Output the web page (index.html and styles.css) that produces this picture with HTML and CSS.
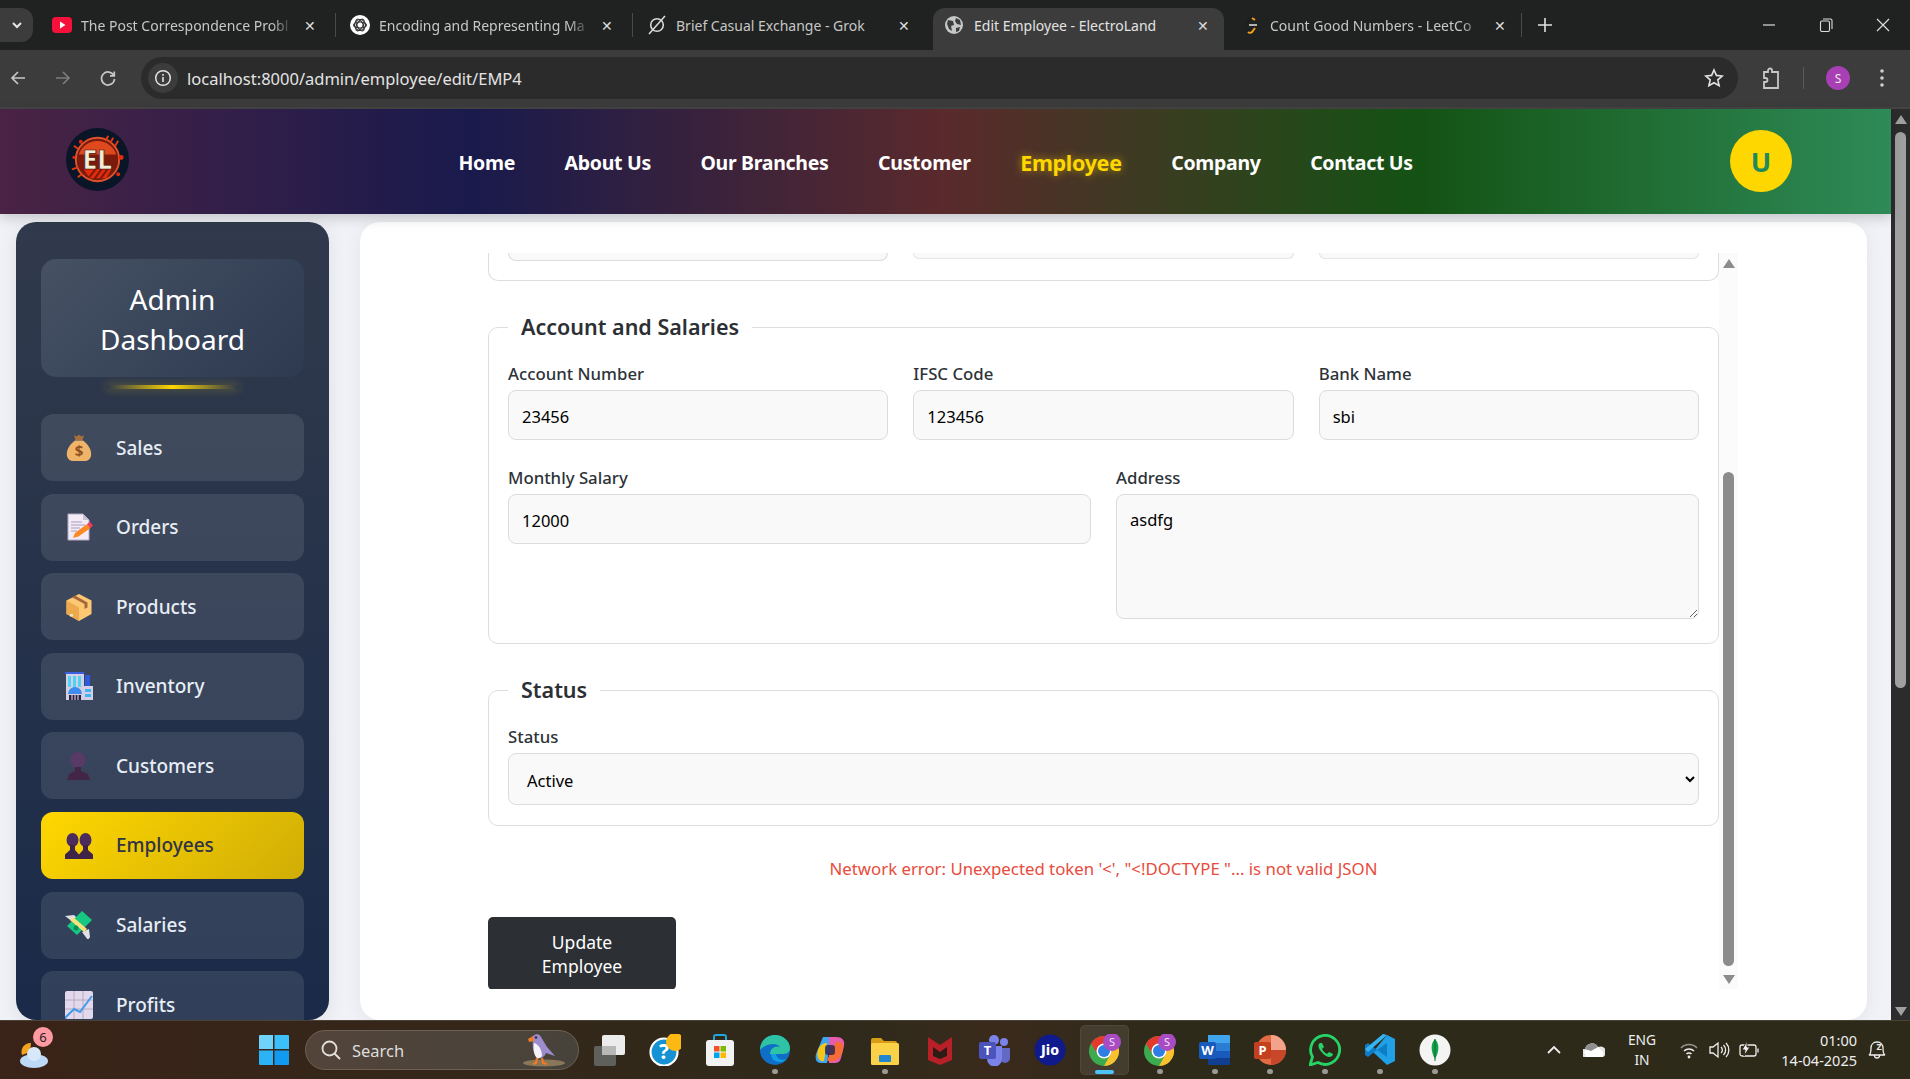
FILE: index.html
```html
<!DOCTYPE html>
<html lang="en">
<head>
<meta charset="utf-8">
<title>Edit Employee - ElectroLand</title>
<link rel="stylesheet" href="styles.css">
</head>
<body>
<div class="tabstrip">
  <div class="tab-menu"><svg width="12" height="12" viewBox="0 0 12 12"><path d="M2 4l4 4 4-4" fill="none" stroke="#e6e6e6" stroke-width="2"/></svg></div>
  <div class="tab">
    <svg class="favicon" viewBox="0 0 20 20"><rect y="2" width="20" height="16" rx="4" fill="#f6113a"/><path d="M8 6.5l5.5 3.5L8 13.5z" fill="#fff"/></svg>
    <span class="tab-title">The Post Correspondence Probl</span><span class="tab-close">✕</span>
  </div>
  <div class="tab tab-sep">
    <svg class="favicon" viewBox="0 0 20 20"><circle cx="10" cy="10" r="10" fill="#fff"/><g fill="none" stroke="#333" stroke-width="1.1"><circle cx="10" cy="10" r="5.5"/><ellipse cx="10" cy="10" rx="6.5" ry="3"/><ellipse cx="10" cy="10" rx="6.5" ry="3" transform="rotate(60 10 10)"/><ellipse cx="10" cy="10" rx="6.5" ry="3" transform="rotate(120 10 10)"/></g></svg>
    <span class="tab-title">Encoding and Representing Ma</span><span class="tab-close">✕</span>
  </div>
  <div class="tab tab-sep">
    <svg class="favicon" viewBox="0 0 20 20"><g fill="none" stroke="#d8d8d8" stroke-width="1.6"><circle cx="10" cy="10" r="6.3"/><path d="M2 19L18 1"/></g></svg>
    <span class="tab-title tab-plain">Brief Casual Exchange - Grok</span><span class="tab-close">✕</span>
  </div>
  <div class="tab tab-active">
    <svg class="favicon" viewBox="0 0 20 20"><circle cx="10" cy="10" r="9" fill="#c4c7c5"/><path d="M4 5l5 1 1 4-3 1 1 5-3-2-2-5zM12 3l4 2 1 5-4-1-2-3zM12 13l4-1-1 4-3 1z" fill="#3c3c3c"/></svg>
    <span class="tab-title tab-plain">Edit Employee - ElectroLand</span><span class="tab-close">✕</span>
  </div>
  <div class="tab tab-last">
    <svg class="favicon" viewBox="0 0 20 20"><path d="M12 1L6 8c-2 2-2 4 0 6l3 3" fill="none" stroke="#1e1e1e" stroke-width="2"/><path d="M14 13l-3 4c-1 1-3 1-4 0M14 5l-3-2" fill="none" stroke="#f89f1b" stroke-width="2"/><path d="M8 10h8" stroke="#b3b3b3" stroke-width="2"/></svg>
    <span class="tab-title">Count Good Numbers - LeetCo</span><span class="tab-close">✕</span>
  </div>
  <div class="tab-sep new-tab"><svg width="14" height="14" viewBox="0 0 14 14"><path d="M7 0v14M0 7h14" stroke="#e3e3e3" stroke-width="1.6"/></svg></div>
  <div class="win-controls">
    <svg width="14" height="14" viewBox="0 0 14 14"><path d="M1 7h12" stroke="#ddd" stroke-width="1.2"/></svg>
    <svg width="14" height="14" viewBox="0 0 14 14"><g fill="none" stroke="#ddd" stroke-width="1.1"><rect x="1.5" y="3" width="9" height="10.5" rx="1.5"/><path d="M4 1h7.5a1.5 1.5 0 0 1 1.5 1.5V11"/></g></svg>
    <svg width="14" height="14" viewBox="0 0 14 14"><path d="M1 1l12 12M13 1L1 13" stroke="#ddd" stroke-width="1.2"/></svg>
  </div>
</div>

<div class="toolbar">
  <svg class="tool" viewBox="0 0 18 18"><path d="M16 9H3M9 3L3 9l6 6" fill="none" stroke="#c7c7c7" stroke-width="1.7"/></svg>
  <svg class="tool tool-off" viewBox="0 0 18 18"><path d="M2 9h13M9 3l6 6-6 6" fill="none" stroke="#7c7c7c" stroke-width="1.7"/></svg>
  <svg class="tool" viewBox="0 0 18 18"><path d="M14.8 6.5A6.5 6.5 0 1 0 15.5 10M15.3 2.5v4.3H11" fill="none" stroke="#c7c7c7" stroke-width="1.7"/></svg>
  <div class="omnibox">
    <span class="site-info"><svg width="18" height="18" viewBox="0 0 18 18"><circle cx="9" cy="9" r="7.3" fill="none" stroke="#e3e3e3" stroke-width="1.5"/><path d="M9 8v5M9 5v1.7" stroke="#e3e3e3" stroke-width="1.6"/></svg></span>
    <span class="url">localhost:8000/admin/employee/edit/EMP4</span>
    <svg class="star" width="20" height="20" viewBox="0 0 20 20"><path d="M10 2l2.4 5.4 5.8.6-4.4 3.9 1.3 5.8L10 14.7l-5.1 3 1.3-5.8L1.8 8l5.800-.6z" fill="none" stroke="#e3e3e3" stroke-width="1.6"/></svg>
  </div>
  <svg class="ext" width="22" height="24" viewBox="0 0 22 24"><path d="M4 6h4V4.500a2 2 0 0 1 4 0V6h6v16H4v-6h1.500a2 2 0 0 0 0-4H4z" fill="none" stroke="#c7c7c7" stroke-width="1.800"/></svg>
  <span class="tool-sep"></span>
  <span class="profile">S</span>
  <svg class="dots" width="6" height="20" viewBox="0 0 6 20"><circle cx="3" cy="3" r="1.8" fill="#d0d0d0"/><circle cx="3" cy="10" r="1.8" fill="#d0d0d0"/><circle cx="3" cy="17" r="1.8" fill="#d0d0d0"/></svg>
</div>

<div class="viewport">
  <div class="page">
    <header class="site-header">
      <svg class="logo" viewBox="0 0 64 64">
        <circle cx="32" cy="32" r="32" fill="#0a1528"/>
        <circle cx="32" cy="32" r="21" fill="#7c1a0c"/>
        <path d="M13 27a20 20 0 0 1 38 0z" fill="#de4a1d"/>
        <path d="M18 42h28l-5 9H24z" fill="#e22b0c"/>
        <path d="M22 52l8-10M28 53l8-11M34 53l8-11" stroke="#7c1a0c" stroke-width="2"/>
        <circle cx="32" cy="32" r="22" fill="none" stroke="#e0532a" stroke-width="2"/>
        <path d="M8 18l4 3M43 8l-3 5M48 10l-3 5M53 13l-3 5M6 42l6-2M12 50l4-3" stroke="#e2380f" stroke-width="2"/>
        <circle cx="56" cy="30" r="2.500" fill="#e22b0c"/><circle cx="53" cy="47" r="2" fill="#e22b0c"/><circle cx="8" cy="30" r="1.500" fill="#e22b0c"/><circle cx="15" cy="14" r="2" fill="#e22b0c"/>
        <text x="32" y="42" class="logo-text">EL</text>
      </svg>
      <nav class="site-nav">
        <a>Home</a><a>About Us</a><a>Our Branches</a><a>Customer</a><a class="current">Employee</a><a>Company</a><a>Contact Us</a>
      </nav>
      <div class="avatar">U</div>
    </header>

    <div class="content">
      <aside class="sidebar">
        <div class="side-title">Admin Dashboard</div>
        <ul class="side-menu">
          <li class="side-item"><svg class="side-icon" viewBox="0 0 28 28"><path d="M9 1l2.500 1.500L14 .8l2.500 1.700L19 1l-1.500 5h-7z" fill="#a9703d"/><path d="M10 6.500h8C24 11 27 17 26 22c-.6 3-3.500 5-6 5H8c-2.500 0-5.400-2-6-5-1-5 2-11 8-15.500z" fill="#f0b468"/><text x="14" y="22" class="money">$</text></svg><span>Sales</span></li>
          <li class="side-item"><svg class="side-icon" viewBox="0 0 28 28"><path d="M3 1h15l6 6v20H3z" fill="#f3ecf6" stroke="#b6a8c6"/><path d="M18 1v6h6z" fill="#cbbfd8"/><path d="M6 9h11M6 12h14M6 15h9M6 18h6" stroke="#a99cbb" stroke-width="1.200"/><path d="M8 25l2-5 12-9 3.500 4-12 8.500z" fill="#fb8a24"/><path d="M22 11l3-2 3 3.500-2.500 2.500z" fill="#f5385f"/></svg><span>Orders</span></li>
          <li class="side-item"><svg class="side-icon" viewBox="0 0 28 28"><path d="M14 1l12.500 6.500v13.500L14 28 1.500 21V7.500z" fill="#fcc873"/><path d="M14 14.500L1.500 7.500V21L14 28z" fill="#eea94c"/><path d="M7 4.200l12.500 6.800v5l3-1.500v-5L10 2.500z" fill="#a6683b"/><rect x="5" y="21" width="3" height="2.500" fill="#f2e3c4"/></svg><span>Products</span></li>
          <li class="side-item"><svg class="side-icon" viewBox="0 0 28 28"><rect x="1" y="1" width="18" height="27" fill="#d4cfe2"/><rect x="0" y="0" width="19" height="2" fill="#3a5fe0"/><path d="M3 4h3v11H3zM8 4h3v11H8zM13 4h3v11h-3z" fill="#4fd3f2"/><rect x="20" y="3" width="5" height="12" fill="#3159e0"/><rect x="18" y="14" width="10" height="14" fill="#d4cfe2"/><path d="M20 17h6v3h-6zM20 22h6v3h-6z" fill="#41b4f5"/><path d="M3 22a7 7 0 0 1 14 0z" fill="#3f8cf0"/><path d="M4 23h12v5H4z" fill="#2c2340"/><path d="M7 23v5M10 23v5M13 23v5" stroke="#e6e2ef"/></svg><span>Inventory</span></li>
          <li class="side-item"><svg class="side-icon" viewBox="0 0 28 28"><ellipse cx="13" cy="8" rx="7.500" ry="8" fill="#583a66"/><path d="M10 15h6v4l7 3 2 6H2l2-6 6-3z" fill="#422547"/></svg><span>Customers</span></li>
          <li class="side-item side-active"><svg class="side-icon" viewBox="0 0 28 28"><ellipse cx="7.500" cy="9" rx="6" ry="7" fill="#4c2c5c"/><path d="M0 28v-4.500L5 19v-5h5v5l4 4.500V28z" fill="#3f2448"/><ellipse cx="20.500" cy="9" rx="6" ry="7" fill="#4c2c5c"/><path d="M14 28v-4.500L18 19v-5h5v5l5 4.500V28z" fill="#3f2448"/></svg><span>Employees</span></li>
          <li class="side-item"><svg class="side-icon" viewBox="0 0 28 28"><path d="M0 5l9-1 4 4-5 3zM17 21l6 8 2-3-1-8z" fill="#dfe0e8"/><path d="M2 15L17 0l10 9-15 15z" fill="#17c882"/><path d="M8 6l14 12-3 3L5 9z" fill="#f9e27c"/><circle cx="11" cy="17" r="2.500" fill="#0d8c5c"/></svg><span>Salaries</span></li>
          <li class="side-item"><svg class="side-icon" viewBox="0 0 28 28"><rect width="28" height="28" rx="2" fill="#e3d9ec"/><path d="M9 0v28M18 0v28M0 9h28M0 18h28" stroke="#b7aac4"/><path d="M0 27l9-9 6 3L27 5" fill="none" stroke="#3e9bea" stroke-width="2"/></svg><span>Profits</span></li>
        </ul>
      </aside>

      <main class="card">
        <div class="scroll-area">
          <form class="form">
            <div class="stub-set">
              <div class="stub stub-tall"></div>
              <div class="stub"></div>
              <div class="stub"></div>
            </div>

            <fieldset class="group">
              <legend>Account and Salaries</legend>
              <div class="row row-3">
                <label class="field">Account Number<input value="23456"></label>
                <label class="field">IFSC Code<input value="123456"></label>
                <label class="field">Bank Name<input value="sbi"></label>
              </div>
              <div class="row row-2">
                <label class="field">Monthly Salary<input value="12000"></label>
                <label class="field">Address<textarea>asdfg</textarea></label>
              </div>
            </fieldset>

            <fieldset class="group">
              <legend>Status</legend>
              <label class="field">Status<select><option>Active</option></select></label>
            </fieldset>

            <p class="error">Network error: Unexpected token '&lt;', "&lt;!DOCTYPE "... is not valid JSON</p>
            <button class="submit" type="button">Update Employee</button>
          </form>
          <div class="inner-scroll">
            <span class="arrow-up"></span>
            <span class="inner-track"><span class="inner-thumb"></span></span>
            <span class="arrow-down"></span>
          </div>
        </div>
      </main>
    </div>
  </div>
  <div class="page-scroll">
    <span class="arrow-up"></span>
    <span class="page-track"><span class="page-thumb"></span></span>
    <span class="arrow-down"></span>
  </div>
</div>

<footer class="taskbar">
  <div class="weather">
    <svg width="32" height="32" viewBox="0 0 32 32"><path d="M14 6a9 9 0 0 0-9 12l8-3z" fill="#f4a31f"/><ellipse cx="17" cy="24" rx="14" ry="7" fill="#bcd9f5"/><circle cx="17" cy="17" r="7" fill="#d6e8fa"/></svg>
    <span class="weather-badge">6</span>
  </div>
  <svg class="win-logo" viewBox="0 0 30 30"><path d="M0 1a1 1 0 0 1 1-1h13v14H0z" fill="#6fd3fb"/><path d="M15.500 0H29a1 1 0 0 1 1 1v13H15.500z" fill="#3cc0fa"/><path d="M0 15.500h14V30H1a1 1 0 0 1-1-1z" fill="#2cb3f7"/><path d="M15.500 15.500H30V29a1 1 0 0 1-1 1H15.500z" fill="#129af1"/></svg>
  <div class="search">
    <svg width="22" height="22" viewBox="0 0 22 22"><circle cx="9.500" cy="9.500" r="7" fill="none" stroke="#e3dfda" stroke-width="1.800"/><path d="M14.500 14.500L20 20" stroke="#e3dfda" stroke-width="2"/></svg>
    <span class="search-text">Search</span>
    <svg class="puffin" width="44" height="38" viewBox="0 0 44 38"><ellipse cx="22" cy="32" rx="21" ry="3.500" fill="#8a7658"/><path d="M11 5c3-3 7-2 8 1l6 10 8 9-9-3c-2 5-6 6-9 4-4-3-5-12-4-21z" fill="#9d8dcf"/><path d="M12 12c4 1 8 6 8 13-2 3-5 3-6 1-2-3-3-8-2-14z" fill="#f5f2fa"/><path d="M11 5L6 8l1 3 5-1z" fill="#f07b23"/><circle cx="14" cy="6.500" r="1.300" fill="#3a2a3c"/><path d="M15 27l-1 5-3 1M20 27l1 5 4 1" fill="none" stroke="#f07b23" stroke-width="2.200"/></svg>
  </div>
  <div class="apps">
    <div class="app"><svg class="app-icon" viewBox="0 0 32 32"><rect y="12" width="22" height="20" rx="2" fill="#5f5f5c"/><rect x="8" y="1" width="23" height="20" rx="2" fill="#ececec"/><rect x="8" y="12" width="14" height="9" fill="#b8b8b6"/></svg></div>
    <div class="app"><svg class="app-icon" viewBox="0 0 32 32"><circle cx="15" cy="18" r="13.500" fill="#1592d3" stroke="#fff" stroke-width="2.200"/><text x="15" y="25" class="qmark">?</text><circle cx="26" cy="8" r="9" fill="#fdb913"/></svg></div>
    <div class="app"><svg class="app-icon" viewBox="0 0 32 32"><path d="M10 7V3a2 2 0 0 1 2-2h8a2 2 0 0 1 2 2v4" fill="none" stroke="#1fa6e0" stroke-width="2"/><rect x="2" y="6" width="28" height="26" rx="3" fill="#f2f2f2"/><rect x="10" y="12" width="5.500" height="5.500" fill="#f25022"/><rect x="16.500" y="12" width="5.500" height="5.500" fill="#7fba00"/><rect x="10" y="18.500" width="5.500" height="5.500" fill="#00a4ef"/><rect x="16.500" y="18.500" width="5.500" height="5.500" fill="#ffb900"/></svg></div>
    <div class="app app-run"><svg class="app-icon" viewBox="0 0 32 32"><circle cx="16" cy="16" r="15" fill="#0f6fc6"/><path d="M1 16C1 6 9 1 16 1c8 0 15 6 15 13 0 5-4 6-8 6H11c0-6 6-9 10-7-3-5-14-4-20 3z" fill="#2fc3a5"/><path d="M12 20c0 5 4 8 9 8 3 0 5-1 7-3-4 2-10 1-11-5z" fill="#11a0e6"/></svg></div>
    <div class="app"><svg class="app-icon" viewBox="0 0 32 32"><path d="M9 3h8l-4 26H7C2 29 1 25 2 20z" fill="#3ea5f0"/><path d="M15 3h7c6 0 9 3 8 9l-3 12c-1 4-3 5-7 5h-5z" fill="#e85cb0"/><path d="M4 16c2-6 6-7 9-7l-3 18c-5 1-8-4-6-11z" fill="#f5c518"/><path d="M22 8c5-2 8 2 7 8-1 5-4 9-9 11-4 1-7 0-7-1z" fill="#f66c35"/><rect x="11" y="11" width="10" height="10" rx="3" fill="#26224b" opacity=".8"/></svg></div>
    <div class="app app-run"><svg class="app-icon" viewBox="0 0 32 32"><path d="M2 6a2 2 0 0 1 2-2h8l3 3h11a2 2 0 0 1 2 2v3H2z" fill="#d89d17"/><rect x="2" y="9" width="28" height="22" rx="1.500" fill="#fbd148"/><rect x="10" y="21" width="12" height="7" rx="1" fill="#2087cf"/></svg></div>
    <div class="app"><svg class="app-icon" viewBox="0 0 32 32"><path d="M4 3l12 8 12-8v23l-12 5-12-5z" fill="#b81f26"/><path d="M9 13l7 5 7-5v9l-7 3-7-3z" fill="#2b1c16"/></svg></div>
    <div class="app"><svg class="app-icon" viewBox="0 0 32 32"><circle cx="25" cy="8" r="4" fill="#7b83eb"/><path d="M20 14h11v10a5 5 0 0 1-10 0z" fill="#6169c4"/><circle cx="15" cy="6" r="5" fill="#7b83eb"/><path d="M8 12h15v13a7 7 0 0 1-15 0z" fill="#7b83eb"/><rect x="0" y="8" width="17" height="17" rx="2" fill="#4b53bc"/><text x="8.500" y="21" class="t-mark">T</text></svg></div>
    <div class="app"><svg class="app-icon" viewBox="0 0 32 32"><circle cx="16" cy="16" r="15.500" fill="#0f1a8c"/><text x="16" y="21" class="jio">Jio</text></svg></div>
    <div class="app app-active"><svg class="app-icon" viewBox="0 0 32 32"><use href="#chrome"/></svg></div>
    <div class="app app-run"><svg class="app-icon" viewBox="0 0 32 32"><defs><g id="chrome"><circle cx="15" cy="17" r="15" fill="#3cab50"/><path d="M15 2a15 15 0 0 1 13 7.500H15a7.500 7.500 0 0 0-6.500 11L2 9.500A15 15 0 0 1 15 2z" fill="#e5392d"/><path d="M28 9.500A15 15 0 0 1 15 32l6.500-11.500A7.500 7.500 0 0 0 15 9.500z" fill="#fbc02d"/><circle cx="15" cy="17" r="7.500" fill="#fff"/><circle cx="15" cy="17" r="6" fill="#2f7ee6"/><circle cx="23" cy="8" r="9" fill="#a94cc4"/><text x="23" y="12" class="chrome-s">S</text></g></defs><use href="#chrome"/></svg></div>
    <div class="app app-run"><svg class="app-icon" viewBox="0 0 32 32"><path d="M9 1h21a1 1 0 0 1 1 1v7H9z" fill="#41a5ee"/><rect x="9" y="9" width="22" height="8" fill="#2b7cd3"/><rect x="9" y="17" width="22" height="7" fill="#185abd"/><path d="M9 24h22v6a1 1 0 0 1-1 1H10a1 1 0 0 1-1-1z" fill="#103f91"/><rect x="0" y="8" width="17" height="17" rx="2" fill="#185abd"/><text x="8.500" y="21" class="t-mark">W</text></svg></div>
    <div class="app app-run"><svg class="app-icon" viewBox="0 0 32 32"><circle cx="17" cy="16" r="15" fill="#e36b44"/><path d="M17 1a15 15 0 0 1 15 15H17z" fill="#f2a38a"/><path d="M17 16h15a15 15 0 0 1-15 15z" fill="#c8472a"/><rect x="0" y="8" width="17" height="17" rx="2" fill="#c4411f"/><text x="8.500" y="21" class="t-mark">P</text></svg></div>
    <div class="app app-run"><svg class="app-icon" viewBox="0 0 32 32"><path d="M1 31l2.500-8A14.500 14.500 0 1 1 9 28.500z" fill="none" stroke="#25d366" stroke-width="2.800"/><path d="M11 9c-2 1-2 4 0 7s6 7 9 7c2 0 4-1 4-3l-4-2-2 2c-2-1-4-3-5-5l2-2-2-4z" fill="#25d366"/></svg></div>
    <div class="app app-run"><svg class="app-icon" viewBox="0 0 32 32"><path d="M23 1l8 4v22l-8 4-14-13z" fill="#22a0e6"/><path d="M23 9v14L9 13l-5-4-3 2v10l3 2 5-4z" fill="#0f7cc6"/><path d="M23 1L4 18l-3-3L19 0z" fill="#35b4f2"/></svg></div>
    <div class="app app-run"><svg class="app-icon" viewBox="0 0 32 32"><circle cx="16" cy="16" r="15.500" fill="#f4f4f2"/><path d="M16 5c4 4 5 11 0 20-5-9-4-16 0-20z" fill="#13a34d"/><path d="M16 5v22" stroke="#0b6b33"/></svg></div>
  </div>
  <div class="tray">
    <span class="tray-caret"><svg width="16" height="10" viewBox="0 0 16 10"><path d="M2 8l6-6 6 6" fill="none" stroke="#eee" stroke-width="1.800"/></svg></span>
    <span class="tray-cloud"><svg width="22" height="16" viewBox="0 0 22 16"><path d="M1 15a4 4 0 0 1 1-8 7 7 0 0 1 13-2 5 5 0 0 1 5 10z" fill="#e6e6e6"/><path d="M1 9L15 5l5 5v5H3z" fill="#fff"/><path d="M2 7a7 7 0 0 1 13-2L8 9z" fill="#8f8f8f"/></svg></span>
    <span class="tray-lang">ENG<br>IN</span>
    <span class="tray-icon"><svg width="20" height="20" viewBox="0 0 20 20"><g fill="none" stroke="#eee" stroke-width="1.500"><path d="M2 8a11 11 0 0 1 16 0" opacity=".55"/><path d="M5 11a7 7 0 0 1 10 0"/><path d="M7.500 14a3.500 3.500 0 0 1 5 0"/></g><circle cx="10" cy="17" r="1.400" fill="#eee"/></svg></span>
    <span class="tray-icon"><svg width="22" height="20" viewBox="0 0 22 20"><g fill="none" stroke="#eee" stroke-width="1.300"><path d="M2 7h3l5-4v14l-5-4H2z"/><path d="M13 7a4 4 0 0 1 0 6M15.500 5a7 7 0 0 1 0 10M18 3a10 10 0 0 1 0 14"/></g></svg></span>
    <span class="tray-icon"><svg width="22" height="20" viewBox="0 0 22 20"><g fill="none" stroke="#eee" stroke-width="1.300"><rect x="2" y="5" width="16" height="11" rx="2"/><path d="M20 8.500v4"/></g><path d="M9 1L4 10h3l-1 6 6-9H9z" fill="#eee" stroke="#2f2a1c"/></svg></span>
    <span class="tray-clock">01:00<br>14-04-2025</span>
    <span class="tray-bell"><svg width="20" height="22" viewBox="0 0 20 22"><path d="M2 16c2-1 2-3 2-7 0-3 2-6 6-6s6 3 6 6c0 4 0 6 2 7zM7.500 16.500a2.500 2.500 0 0 0 5 0" fill="none" stroke="#eee" stroke-width="1.300"/><text x="12" y="11" class="zzz">Z</text></svg></span>
  </div>
</footer>
</body>
</html>
```
FILE: styles.css
```css
* { box-sizing: border-box; }
html, body { margin: 0; height: 100%; overflow: hidden; }
body {
  width: 1910px; height: 1079px;
  display: flex; flex-direction: column;
  font-family: "Noto Sans", "Open Sans", sans-serif;
  background: #f0f2f7;
}

/* Browser tab strip */
.tabstrip {
  height: 50px; flex: none;
  display: flex; align-items: flex-end;
  background: #202221;
  color: #c7c7c7;
  font-size: 14px;
}
.tab-menu {
  width: 33px; height: 34px; margin: 0 5px 8px 0;
  display: flex; align-items: center; justify-content: center;
  background: #3c3c3c; border-radius: 0 12px 12px 0;
}
.tab {
  width: 297px; height: 42px; flex: none;
  padding: 0 17px 8px 14px;
  display: flex; align-items: center; gap: 9px;
}
.tab-sep { border-left: 1px solid #4a4a4a; background-clip: padding-box; }
.tab.tab-sep { height: 24px; padding-bottom: 0; margin-bottom: 13px; }
.tab-active {
  width: 291px; margin-left: 4px; padding: 0 13px 8px 11px; gap: 10px;
  background: #3c3c3c; color: #e3e3e3;
  border-radius: 12px 12px 0 0;
}
.tab-last { margin-left: 1px; padding: 0 13px 8px 16px; width: 296px; }
.favicon { width: 20px; height: 20px; flex: none; }
.tab-title {
  flex: 1; min-width: 0;
  white-space: nowrap;
  -webkit-mask-image: linear-gradient(90deg, #000 90%, transparent);
  mask-image: linear-gradient(90deg, #000 90%, transparent);
}
.tab-plain { -webkit-mask-image: none; mask-image: none; }
.tab-close { font-size: 14px; color: #dcdcdc; flex: none; width: 16px; text-align: center; }
.new-tab { width: 47px; height: 24px; margin-bottom: 13px; display: flex; align-items: center; justify-content: center; }
.win-controls {
  margin-left: auto; height: 50px;
  padding: 0 20px 0 0;
  display: flex; align-items: center; gap: 43px;
}

/* Browser toolbar */
.toolbar {
  height: 59px; flex: none;
  padding: 8px 0 9px 0;
  display: flex; align-items: center;
  background: #3c3c3c;
  border-bottom: 2px solid #444;
}
.tool { width: 18px; height: 18px; margin-left: 9px; margin-right: 18px; flex: none; }
.omnibox {
  width: 1597px; height: 42px; margin-left: 6px; flex: none;
  padding: 0 14px 0 7px;
  display: flex; align-items: center;
  background: #2b2b2b; border-radius: 21px;
}
.site-info {
  width: 30px; height: 30px; border-radius: 50%;
  display: flex; align-items: center; justify-content: center;
  background: #3c3c3c;
}
.url { margin-left: 9px; color: #e3e3e3; font-size: 16.500px; }
.star { margin-left: auto; }
.ext { margin-left: 22px; flex: none; }
.tool-sep { width: 1px; height: 22px; margin-left: 21px; background: #5a5a5a; flex: none; }
.profile {
  width: 24px; height: 24px; margin-left: 22px; flex: none;
  display: flex; align-items: center; justify-content: center;
  background: #a83fb5; color: #eed; border-radius: 50%; font-size: 12px;
}
.dots { margin-left: 29px; flex: none; }

/* Viewport */
.viewport { flex: none; height: 911px; display: flex; }
.page { flex: 1; min-width: 0; display: flex; flex-direction: column; }
.page-scroll {
  width: 19px; flex: none;
  display: flex; flex-direction: column; align-items: center;
  padding: 6px 0 4px;
  background: #2c2c2c;
}
.page-track { flex: 1; width: 11px; padding-top: 6px; margin: 2px 0; }
.page-thumb { display: block; width: 11px; height: 556px; background: #a0a0a0; border-radius: 6px; }
.page-scroll .arrow-up { border-bottom-color: #a0a0a0; }
.page-scroll .arrow-down { border-top-color: #a0a0a0; }
.arrow-up, .arrow-down { width: 0; height: 0; flex: none; border-left: 6.500px solid transparent; border-right: 6.500px solid transparent; }
.arrow-up { border-bottom: 9px solid #8c8c8c; }
.arrow-down { border-top: 9px solid #8c8c8c; }

/* Site header */
.site-header {
  height: 105px; flex: none;
  position: relative; z-index: 1;
  padding: 19px 99px 0 66px;
  display: flex; align-items: flex-start;
  background: linear-gradient(90deg, #4a2345, #191a4c 25%, #5a2a2c 50%, #145214 75%, #2e8b57);
  box-shadow: 0 4px 12px rgba(0, 0, 0, .18);
}
.logo { width: 63px; height: 63px; flex: none; }
.logo-text { font: 800 27px "Noto Sans", sans-serif; fill: #f3ecd8; text-anchor: middle; stroke: #3a0f08; stroke-width: .7px; }
.site-nav {
  margin-left: 329.500px; height: 69px;
  display: flex; align-items: center; gap: 49.500px;
  color: #fff; font-size: 19.500px; font-weight: 700; white-space: nowrap;
  letter-spacing: -.3px;
}
.current { color: #ffd700; font-size: 21.500px; text-shadow: 0 0 9px rgba(255, 215, 0, .55); }
.avatar {
  width: 62px; height: 62px; margin: 2px 0 0 auto; flex: none;
  display: flex; align-items: center; justify-content: center;
  background: #ffd700; color: #218a5a; border-radius: 50%;
  font-size: 27px; font-weight: 700;
}

/* Content */
.content { flex: 1; min-height: 0; padding: 8px 24px 0 16px; display: flex; gap: 31px; }
.sidebar {
  width: 313px; flex: none;
  padding: 37px 25px 0;
  overflow: hidden;
  background: linear-gradient(180deg, #313a4c, #1a2a48);
  border-radius: 20px;
  box-shadow: 0 4px 20px rgba(0, 0, 0, .08);
}
.side-title {
  position: relative;
  height: 118px; margin-bottom: 37px;
  display: flex; align-items: center; justify-content: center;
  padding: 2px 40px 0;
  text-align: center; color: #fff; font-size: 28px; line-height: 40px;
  background: linear-gradient(135deg, #465164, #2d3a50);
  border-radius: 15px;
}
.side-title::after {
  content: ""; position: absolute; left: 65px; right: 65px; bottom: -12px; height: 4px;
  background: linear-gradient(90deg, transparent, #ffd700, transparent);
  border-radius: 2px;
  box-shadow: 0 0 10px rgba(255, 215, 0, .35);
}
.side-menu { margin: 0; padding: 0; list-style: none; display: flex; flex-direction: column; gap: 12.600px; }
.side-item {
  height: 67px; flex: none;
  padding: 0 0 0 24px;
  display: flex; align-items: center; gap: 23px;
  background: rgba(255, 255, 255, .1);
  color: #e6edf5; font-size: 19px; font-weight: 500;
  border-radius: 12px;
}
.side-active { background: linear-gradient(135deg, #ffd700, #d0ad06); color: #2f3346; }
.side-icon { width: 28px; height: 28px; flex: none; }
.money { font: 700 15px "Noto Sans", sans-serif; fill: #8f4f20; text-anchor: middle; }

/* Main card */
.card {
  flex: 1; min-width: 0;
  padding: 31px 129px 31px 128px;
  background: #fff;
  border-radius: 20px;
  box-shadow: 0 4px 20px rgba(0, 0, 0, .06);
}
.scroll-area { height: 100%; display: flex; overflow: hidden; }
.form { width: 1231px; flex: none; }
.inner-scroll {
  width: 19px; flex: none;
  padding: 6px 0 5px;
  display: flex; flex-direction: column; align-items: center;
  background: #fbfbfb;
}
.inner-track { flex: 1; width: 11px; padding-top: 204px; margin: 0 0 4px; display: block; }
.inner-thumb { display: block; width: 11px; height: 494px; background: #8c8c8c; border-radius: 6px; }

.stub-set {
  height: 28px;
  padding: 0 19px;
  display: grid; grid-template-columns: repeat(3, 1fr); gap: 25px; align-items: start;
  border: 1px solid #ddd; border-top: 0;
  border-radius: 0 0 10px 10px;
}
.stub {
  height: 6px;
  background: #f9f9f9;
  border: 1px solid #e4e4e8; border-top: 0;
  border-radius: 0 0 8px 8px;
}
.stub-tall { height: 8px; border-color: #dcdcdc; }

.group {
  margin: 31px 0 0; padding: 0 19px 24px;
  min-width: 0;
  border: 1px solid #ddd;
  border-radius: 10px;
}
.group legend {
  padding: 0 13px;
  height: 30px; line-height: 30px;
  color: #2c3034; font-size: 21.500px; font-weight: 600;
}
.row { display: grid; gap: 25px; align-items: start; }
.row-3 { grid-template-columns: repeat(3, 1fr); margin-top: 20px; }
.row-2 { grid-template-columns: repeat(2, 1fr); margin-top: 26px; }
.field {
  display: flex; flex-direction: column; gap: 4px;
  color: #2d3338; font-size: 16.800px; font-weight: 500; line-height: 24px;
}
.group > .field { margin-top: 20px; }
.field input, .field textarea, .field select {
  width: 100%; height: 50px;
  padding: 2px 13px 0;
  background: #f9f9f9; color: #000;
  font: 16.500px "Noto Sans", sans-serif;
  border: 1px solid #dcdcdc; border-radius: 8px;
  outline: none;
}
.field textarea { display: block; height: 125px; padding: 13px 13px; resize: vertical; }
.field select { height: 52px; padding: 2px 14px 0; }
.group:last-of-type { padding-bottom: 20px; }
.error {
  margin: 31px 0 36px;
  height: 24px; line-height: 24px;
  text-align: center; color: #e74c3c; font-size: 16.800px;
}
.submit {
  display: block; width: 188px; height: 73px;
  padding: 0 40px;
  background: #2c3034; color: #fff;
  font: 17.500px/24px "Noto Sans", sans-serif;
  border: 0; border-radius: 5px;
}

/* Taskbar */
.taskbar {
  flex: none; height: 59px;
  padding-left: 17px;
  display: flex; align-items: center;
  background: linear-gradient(90deg, #3a2318, #2f2a1b 45%, #3a2a1c 52%, #2d2a1a 62%, #2d2a1a);
  border-top: 1px solid #4b4238;
  color: #eee;
}
.weather { position: relative; width: 32px; height: 38px; flex: none; }
.weather svg { position: absolute; left: 0; bottom: 0; }
.weather-badge {
  position: absolute; right: -4px; top: -4px;
  width: 20px; height: 20px;
  display: flex; align-items: center; justify-content: center;
  background: #ff9aa2; color: #222; border-radius: 50%; font-size: 13px;
}
.win-logo { width: 30px; height: 30px; margin-left: 210px; flex: none; }
.search {
  width: 274px; height: 40px; margin-left: 16px; flex: none;
  padding: 0 12px 0 14px;
  display: flex; align-items: center;
  background: linear-gradient(90deg, #53443a, #47433a);
  border: 1px solid #6c6055; border-radius: 20px;
}
.search-text { margin-left: 10px; color: #ddd; font-size: 16.500px; }
.puffin { margin-left: auto; }
.apps { margin-left: 3px; display: flex; height: 100%; flex: none; }
.app { position: relative; width: 55px; display: flex; align-items: center; justify-content: center; flex: none; }
.app-icon { width: 32px; height: 32px; display: block; }
.app-run::after {
  content: ""; position: absolute; left: 25px; bottom: 5px;
  width: 6px; height: 5px; background: #9a9a95; border-radius: 3px;
}
.app-active::before {
  content: ""; position: absolute; left: 3px; right: 3px; top: 4px; bottom: 4px;
  background: rgba(255, 255, 255, .09); border: 1px solid rgba(255, 255, 255, .06); border-radius: 5px;
}
.app-active::after {
  content: ""; position: absolute; left: 18px; bottom: 5px;
  width: 19px; height: 4px; background: #4cc2ff; border-radius: 2px;
}
.app-active .app-icon { position: relative; }
.qmark { font: 700 21px "Noto Sans", sans-serif; fill: #fff; text-anchor: middle; }
.t-mark { font: 700 13px "Noto Sans", sans-serif; fill: #fff; text-anchor: middle; }
.jio { font: 800 14px "Noto Sans", sans-serif; fill: #fff; text-anchor: middle; }
.chrome-s { font: 400 11px "Noto Sans", sans-serif; fill: #f0e4f4; text-anchor: middle; }
.zzz { font: 700 9px "Noto Sans", sans-serif; fill: #eee; text-anchor: middle; }
.tray { margin-left: auto; margin-right: 13px; display: flex; align-items: center; flex: none; }
.tray > span { display: flex; align-items: center; justify-content: center; flex: none; }
.tray-caret { width: 28px; }
.tray-cloud { width: 52px; }
.tray > .tray-lang { width: 44px; margin-right: 10px; display: block; text-align: center; font-size: 13.800px; line-height: 20px; }
.tray-icon { width: 30px; }
.tray > .tray-clock { width: 93px; display: block; text-align: right; font-size: 14.500px; line-height: 20px; }
.tray-bell { width: 40px; }
```
